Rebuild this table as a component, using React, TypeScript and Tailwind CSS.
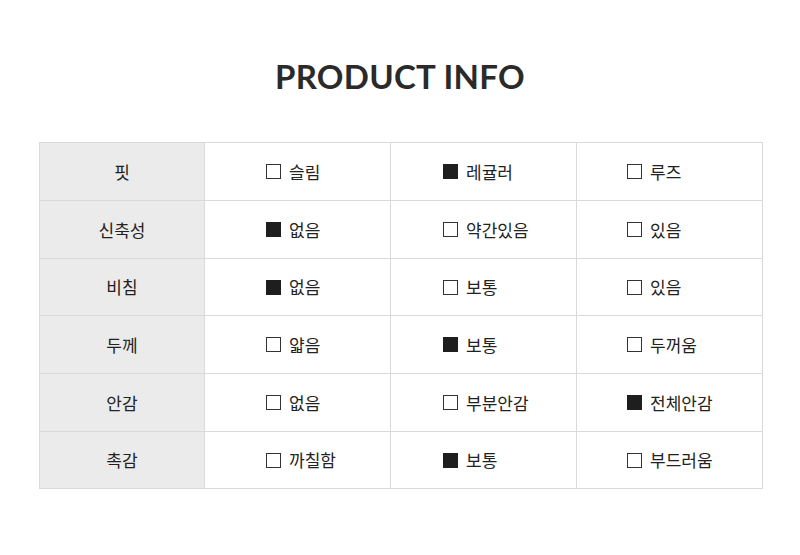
const rows: { label: string; options: [string, boolean][] }[] = [
  { label: '핏', options: [['슬림', false], ['레귤러', true], ['루즈', false]] },
  { label: '신축성', options: [['없음', true], ['약간있음', false], ['있음', false]] },
  { label: '비침', options: [['없음', true], ['보통', false], ['있음', false]] },
  { label: '두께', options: [['얇음', false], ['보통', true], ['두꺼움', false]] },
  { label: '안감', options: [['없음', false], ['부분안감', false], ['전체안감', true]] },
  { label: '촉감', options: [['까칠함', false], ['보통', true], ['부드러움', false]] },
];

const colPad = ['pl-[61px]', 'pl-[52px]', 'pl-[50px]'];
const rowH = ['h-[58px]', 'h-[58px]', 'h-[57px]', 'h-[58px]', 'h-[58px]', 'h-[57px]'];

function Box({ on }: { on: boolean }) {
  return (
    <span
      className={
        on
          ? 'inline-block w-[15px] h-[15px] bg-[#1e1e1e]'
          : 'inline-block w-[15px] h-[15px] border border-[#333] bg-white'
      }
    />
  );
}

export default function App() {
  return (
    <div className="w-[800px] h-[555px] bg-white font-['Noto_Sans_CJK_KR',sans-serif] text-[#222]">
      <h1 className="pt-[55px] text-center font-['Lato',sans-serif] font-bold text-[33px] leading-[42px] tracking-[0.3px] text-[#2a2a2a]">
        PRODUCT INFO
      </h1>
      <div className="mx-[39px] mt-[45px] w-[724px] border-t border-l border-[#d9d9d9]">
        {rows.map((r, ri) => (
          <div key={r.label} className={`grid grid-cols-[165px_186px_186px_186px] ${rowH[ri]}`}>
            <div className="flex items-center justify-center bg-[#ebebeb] border-r border-b border-[#d9d9d9] text-[17px]">
              {r.label}
            </div>
            {r.options.map(([text, on], i) => (
              <div
                key={text + i}
                className={`flex items-center gap-[8px] border-r border-b border-[#d9d9d9] text-[17px] ${colPad[i]}`}
              >
                <Box on={on} />
                <span>{text}</span>
              </div>
            ))}
          </div>
        ))}
      </div>
    </div>
  );
}
